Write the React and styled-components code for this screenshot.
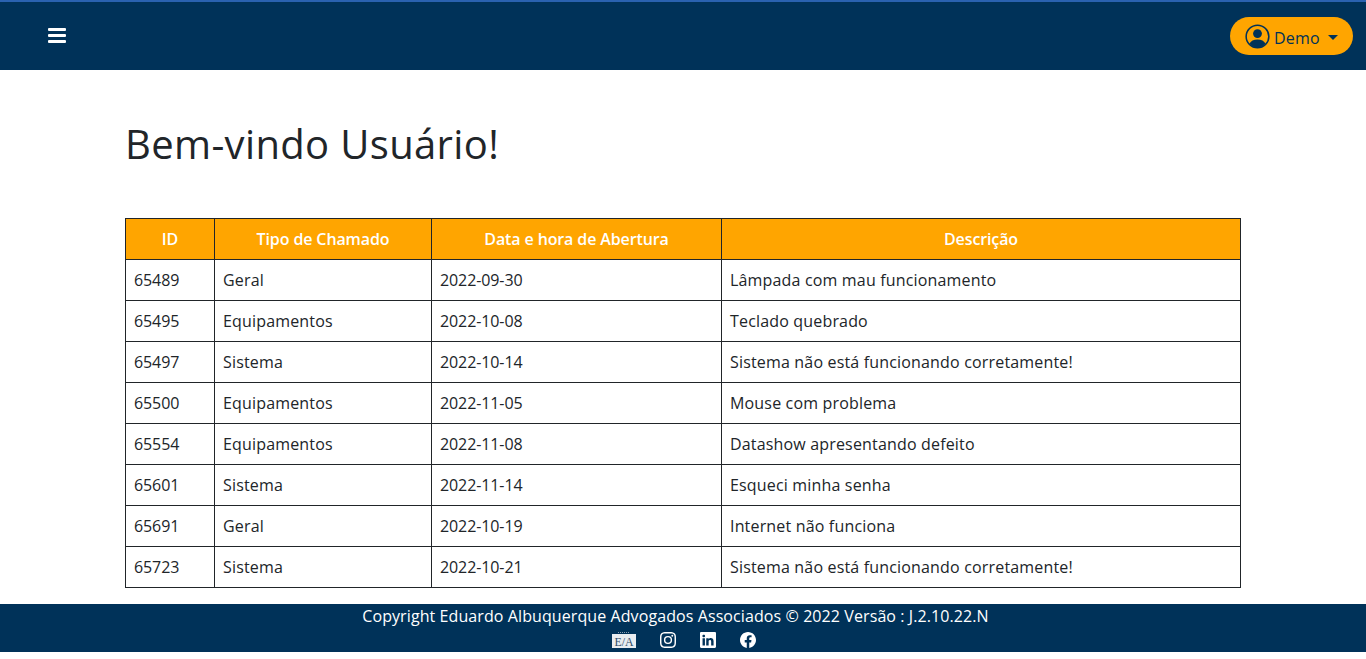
import styled, { createGlobalStyle } from "styled-components"

const tickets = [
  { id: 65489, type: "Geral", date: "2022-09-30", text: "Lâmpada com mau funcionamento" },
  { id: 65495, type: "Equipamentos", date: "2022-10-08", text: "Teclado quebrado" },
  { id: 65497, type: "Sistema", date: "2022-10-14", text: "Sistema não está funcionando corretamente!" },
  { id: 65500, type: "Equipamentos", date: "2022-11-05", text: "Mouse com problema" },
  { id: 65554, type: "Equipamentos", date: "2022-11-08", text: "Datashow apresentando defeito" },
  { id: 65601, type: "Sistema", date: "2022-11-14", text: "Esqueci minha senha" },
  { id: 65691, type: "Geral", date: "2022-10-19", text: "Internet não funciona" },
  { id: 65723, type: "Sistema", date: "2022-10-21", text: "Sistema não está funcionando corretamente!" },
]

const GlobalStyle = createGlobalStyle`
  * { box-sizing: border-box; }
  html, body { margin: 0; background: #fff; }
  body {
    font-family: "Open Sans", "Noto Sans", sans-serif;
    color: #212529;
    overflow: hidden;
  }
`

const Page = styled.div`
  height: 659px;
  display: flex;
  flex-direction: column;
`

const Navbar = styled.header`
  height: 70px;
  background: #003259;
  border-top: 2px solid #2a62b0;
  display: flex;
  align-items: center;
  justify-content: space-between;
  padding: 0 13px 0 48px;
  flex-shrink: 0;
`

const Burger = styled.button`
  width: 18px;
  height: 15px;
  padding: 0;
  border: 0;
  background: none;
  display: flex;
  flex-direction: column;
  justify-content: space-between;
  margin-top: -2px;
`

const BurgerBar = styled.span`
  height: 3px;
  border-radius: 1px;
  background: #fff;
`

const UserButton = styled.button`
  width: 123px;
  height: 38px;
  padding: 0 0 0 15px;
  border: 0;
  border-radius: 19px;
  background: #ffa500;
  color: #003259;
  font-family: inherit;
  font-size: 16px;
  letter-spacing: 0.2px;
  display: flex;
  align-items: center;
`

const UserName = styled.span`
  margin: 4px 0 0 4px;
`

const Caret = styled.span`
  margin: 2px 0 0 8px;
  border-top: 5px solid #003259;
  border-left: 5px solid transparent;
  border-right: 5px solid transparent;
`

const Main = styled.main`
  flex: 1;
  padding: 48px 125px 0;
`

const Title = styled.h1`
  margin: 0 0 48px;
  font-size: 40px;
  font-weight: 400;
  line-height: 52px;
  letter-spacing: 0.35px;
`

const Table = styled.table`
  width: 1115px;
  border-collapse: collapse;
  table-layout: fixed;
  font-size: 16px;
`

const HeadCell = styled.th`
  width: ${props => props.$width}px;
  height: 41px;
  padding: 0 8px;
  border: 1px solid #212529;
  background: #ffa500;
  color: #fff;
  font-weight: 600;
  letter-spacing: -0.12px;
  text-align: center;
`

const Cell = styled.td`
  height: 41px;
  padding: 0 8px;
  border: 1px solid #212529;
  letter-spacing: ${props => (props.$numeric ? "-0.1px" : "0.17px")};
`

const Footer = styled.footer`
  height: 48px;
  margin-bottom: 7px;
  background: #003259;
  color: #fff;
  font-size: 16px;
  display: flex;
  flex-direction: column;
  align-items: center;
  flex-shrink: 0;
`

const Copyright = styled.div`
  line-height: 24px;
  margin-right: 15px;
  letter-spacing: 0.09px;
`

const Socials = styled.div`
  display: flex;
  align-items: center;
  gap: 24px;
  height: 24px;
  padding-left: 2px;
`

const LogoText = styled.text`
  font-family: "Liberation Serif", serif;
  font-size: 13px;
  fill: #2f4d6a;
`

const Logo = () => (
  <svg width="24" height="16" viewBox="0 0 24 16">
    <rect y="2" width="24" height="14" fill="#e9edf1" />
    <path d="M6 .5h12" stroke="#8ea1b3" strokeWidth="1" strokeDasharray="1 1" />
    <LogoText x="12" y="13.5" textAnchor="middle" textLength="19" lengthAdjust="spacingAndGlyphs">E/A</LogoText>
  </svg>
)

const Instagram = () => (
  <svg width="16" height="16" viewBox="0 0 16 16" fill="#fff">
    <path d="M8 0C5.83 0 5.56.01 4.7.05 3.85.09 3.27.22 2.76.42a3.9 3.9 0 0 0-1.42.92A3.9 3.9 0 0 0 .42 2.76C.22 3.27.09 3.85.05 4.7.01 5.56 0 5.83 0 8s.01 2.44.05 3.3c.04.85.17 1.43.37 1.94.2.53.48.98.92 1.42.44.44.89.72 1.42.92.51.2 1.09.33 1.94.37.86.04 1.13.05 3.3.05s2.44-.01 3.3-.05c.85-.04 1.43-.17 1.94-.37a3.9 3.9 0 0 0 1.42-.92c.44-.44.72-.89.92-1.42.2-.51.33-1.09.37-1.94.04-.86.05-1.13.05-3.3s-.01-2.44-.05-3.3c-.04-.85-.17-1.43-.37-1.94a3.9 3.9 0 0 0-.92-1.42A3.9 3.9 0 0 0 13.24.42c-.51-.2-1.09-.33-1.94-.37C10.44.01 10.17 0 8 0Zm0 1.44c2.14 0 2.39.01 3.23.05.78.04 1.2.17 1.48.27.37.15.64.32.92.6.28.28.45.55.6.92.1.28.23.7.27 1.48.04.84.05 1.09.05 3.23s-.01 2.39-.05 3.23c-.04.78-.17 1.2-.27 1.48-.15.37-.32.64-.6.92-.28.28-.55.45-.92.6-.28.1-.7.23-1.48.27-.84.04-1.09.05-3.23.05s-2.39-.01-3.23-.05c-.78-.04-1.2-.17-1.48-.27a2.5 2.5 0 0 1-.92-.6 2.5 2.5 0 0 1-.6-.92c-.1-.28-.23-.7-.27-1.48C1.45 10.39 1.44 10.14 1.44 8s.01-2.39.05-3.23c.04-.78.17-1.2.27-1.48.15-.37.32-.64.6-.92.28-.28.55-.45.92-.6.28-.1.7-.23 1.48-.27C5.61 1.45 5.86 1.44 8 1.44Z" />
    <path d="M8 3.89a4.11 4.11 0 1 0 0 8.22 4.11 4.11 0 0 0 0-8.22Zm0 6.78a2.67 2.67 0 1 1 0-5.34 2.67 2.67 0 0 1 0 5.34Z" />
    <circle cx="12.27" cy="3.73" r=".96" />
  </svg>
)

const Linkedin = () => (
  <svg width="16" height="16" viewBox="0 0 16 16" fill="#fff">
    <path d="M0 1.15C0 .51.53 0 1.18 0h13.64C15.47 0 16 .51 16 1.15v13.7c0 .64-.53 1.15-1.18 1.15H1.18C.53 16 0 15.49 0 14.85V1.15Zm4.94 12.24V6.17H2.54v7.22h2.4ZM3.74 5.18c.84 0 1.36-.55 1.36-1.25-.02-.71-.52-1.25-1.34-1.25-.82 0-1.36.54-1.36 1.25 0 .7.52 1.25 1.32 1.25h.02Zm4.91 8.21V9.36c0-.22.02-.43.08-.58.17-.43.57-.88 1.23-.88.87 0 1.21.66 1.21 1.63v3.86h2.4V9.25c0-2.22-1.18-3.25-2.76-3.25-1.27 0-1.84.7-2.16 1.19v.02h-.02l.02-.02V6.17h-2.4c.03.68 0 7.22 0 7.22h2.4Z" />
  </svg>
)

const Facebook = () => (
  <svg width="16" height="16" viewBox="0 0 16 16" fill="#fff">
    <path d="M16 8.05C16 3.6 12.42 0 8 0S0 3.6 0 8.05c0 4.02 2.93 7.35 6.75 7.95v-5.62H4.72V8.05h2.03V6.28c0-2.02 1.2-3.13 3.02-3.13.88 0 1.8.16 1.8.16v1.98h-1.01c-1 0-1.31.62-1.31 1.26v1.5h2.22l-.35 2.33H9.25V16C13.07 15.4 16 12.07 16 8.05Z" />
  </svg>
)

const UserIcon = () => (
  <svg width="25" height="25" viewBox="0 0 26 26" fill="#003259">
    <circle cx="13" cy="13" r="11.8" fill="none" stroke="#003259" strokeWidth="1.6" />
    <circle cx="13" cy="10" r="4.6" />
    <path d="M4.6 20.6c1.4-3.2 4.4-4.6 8.4-4.6s7 1.4 8.4 4.6A11.8 11.8 0 0 1 13 24.6c-3.3 0-6.3-1.5-8.4-4Z" />
  </svg>
)

export default function App() {
  return (
    <Page>
      <GlobalStyle />
      <Navbar>
        <Burger aria-label="menu">
          <BurgerBar />
          <BurgerBar />
          <BurgerBar />
        </Burger>
        <UserButton>
          <UserIcon />
          <UserName>Demo</UserName>
          <Caret />
        </UserButton>
      </Navbar>
      <Main>
        <Title>Bem-vindo Usuário!</Title>
        <Table>
          <thead>
            <tr>
              <HeadCell $width={89}>ID</HeadCell>
              <HeadCell $width={217}>Tipo de Chamado</HeadCell>
              <HeadCell $width={290}>Data e hora de Abertura</HeadCell>
              <HeadCell $width={519}>Descrição</HeadCell>
            </tr>
          </thead>
          <tbody>
            {tickets.map(ticket => (
              <tr key={ticket.id}>
                <Cell $numeric>{ticket.id}</Cell>
                <Cell>{ticket.type}</Cell>
                <Cell $numeric>{ticket.date}</Cell>
                <Cell>{ticket.text}</Cell>
              </tr>
            ))}
          </tbody>
        </Table>
      </Main>
      <Footer>
        <Copyright>Copyright Eduardo Albuquerque Advogados Associados © 2022 Versão : J.2.10.22.N</Copyright>
        <Socials>
          <Logo />
          <Instagram />
          <Linkedin />
          <Facebook />
        </Socials>
      </Footer>
    </Page>
  )
}
